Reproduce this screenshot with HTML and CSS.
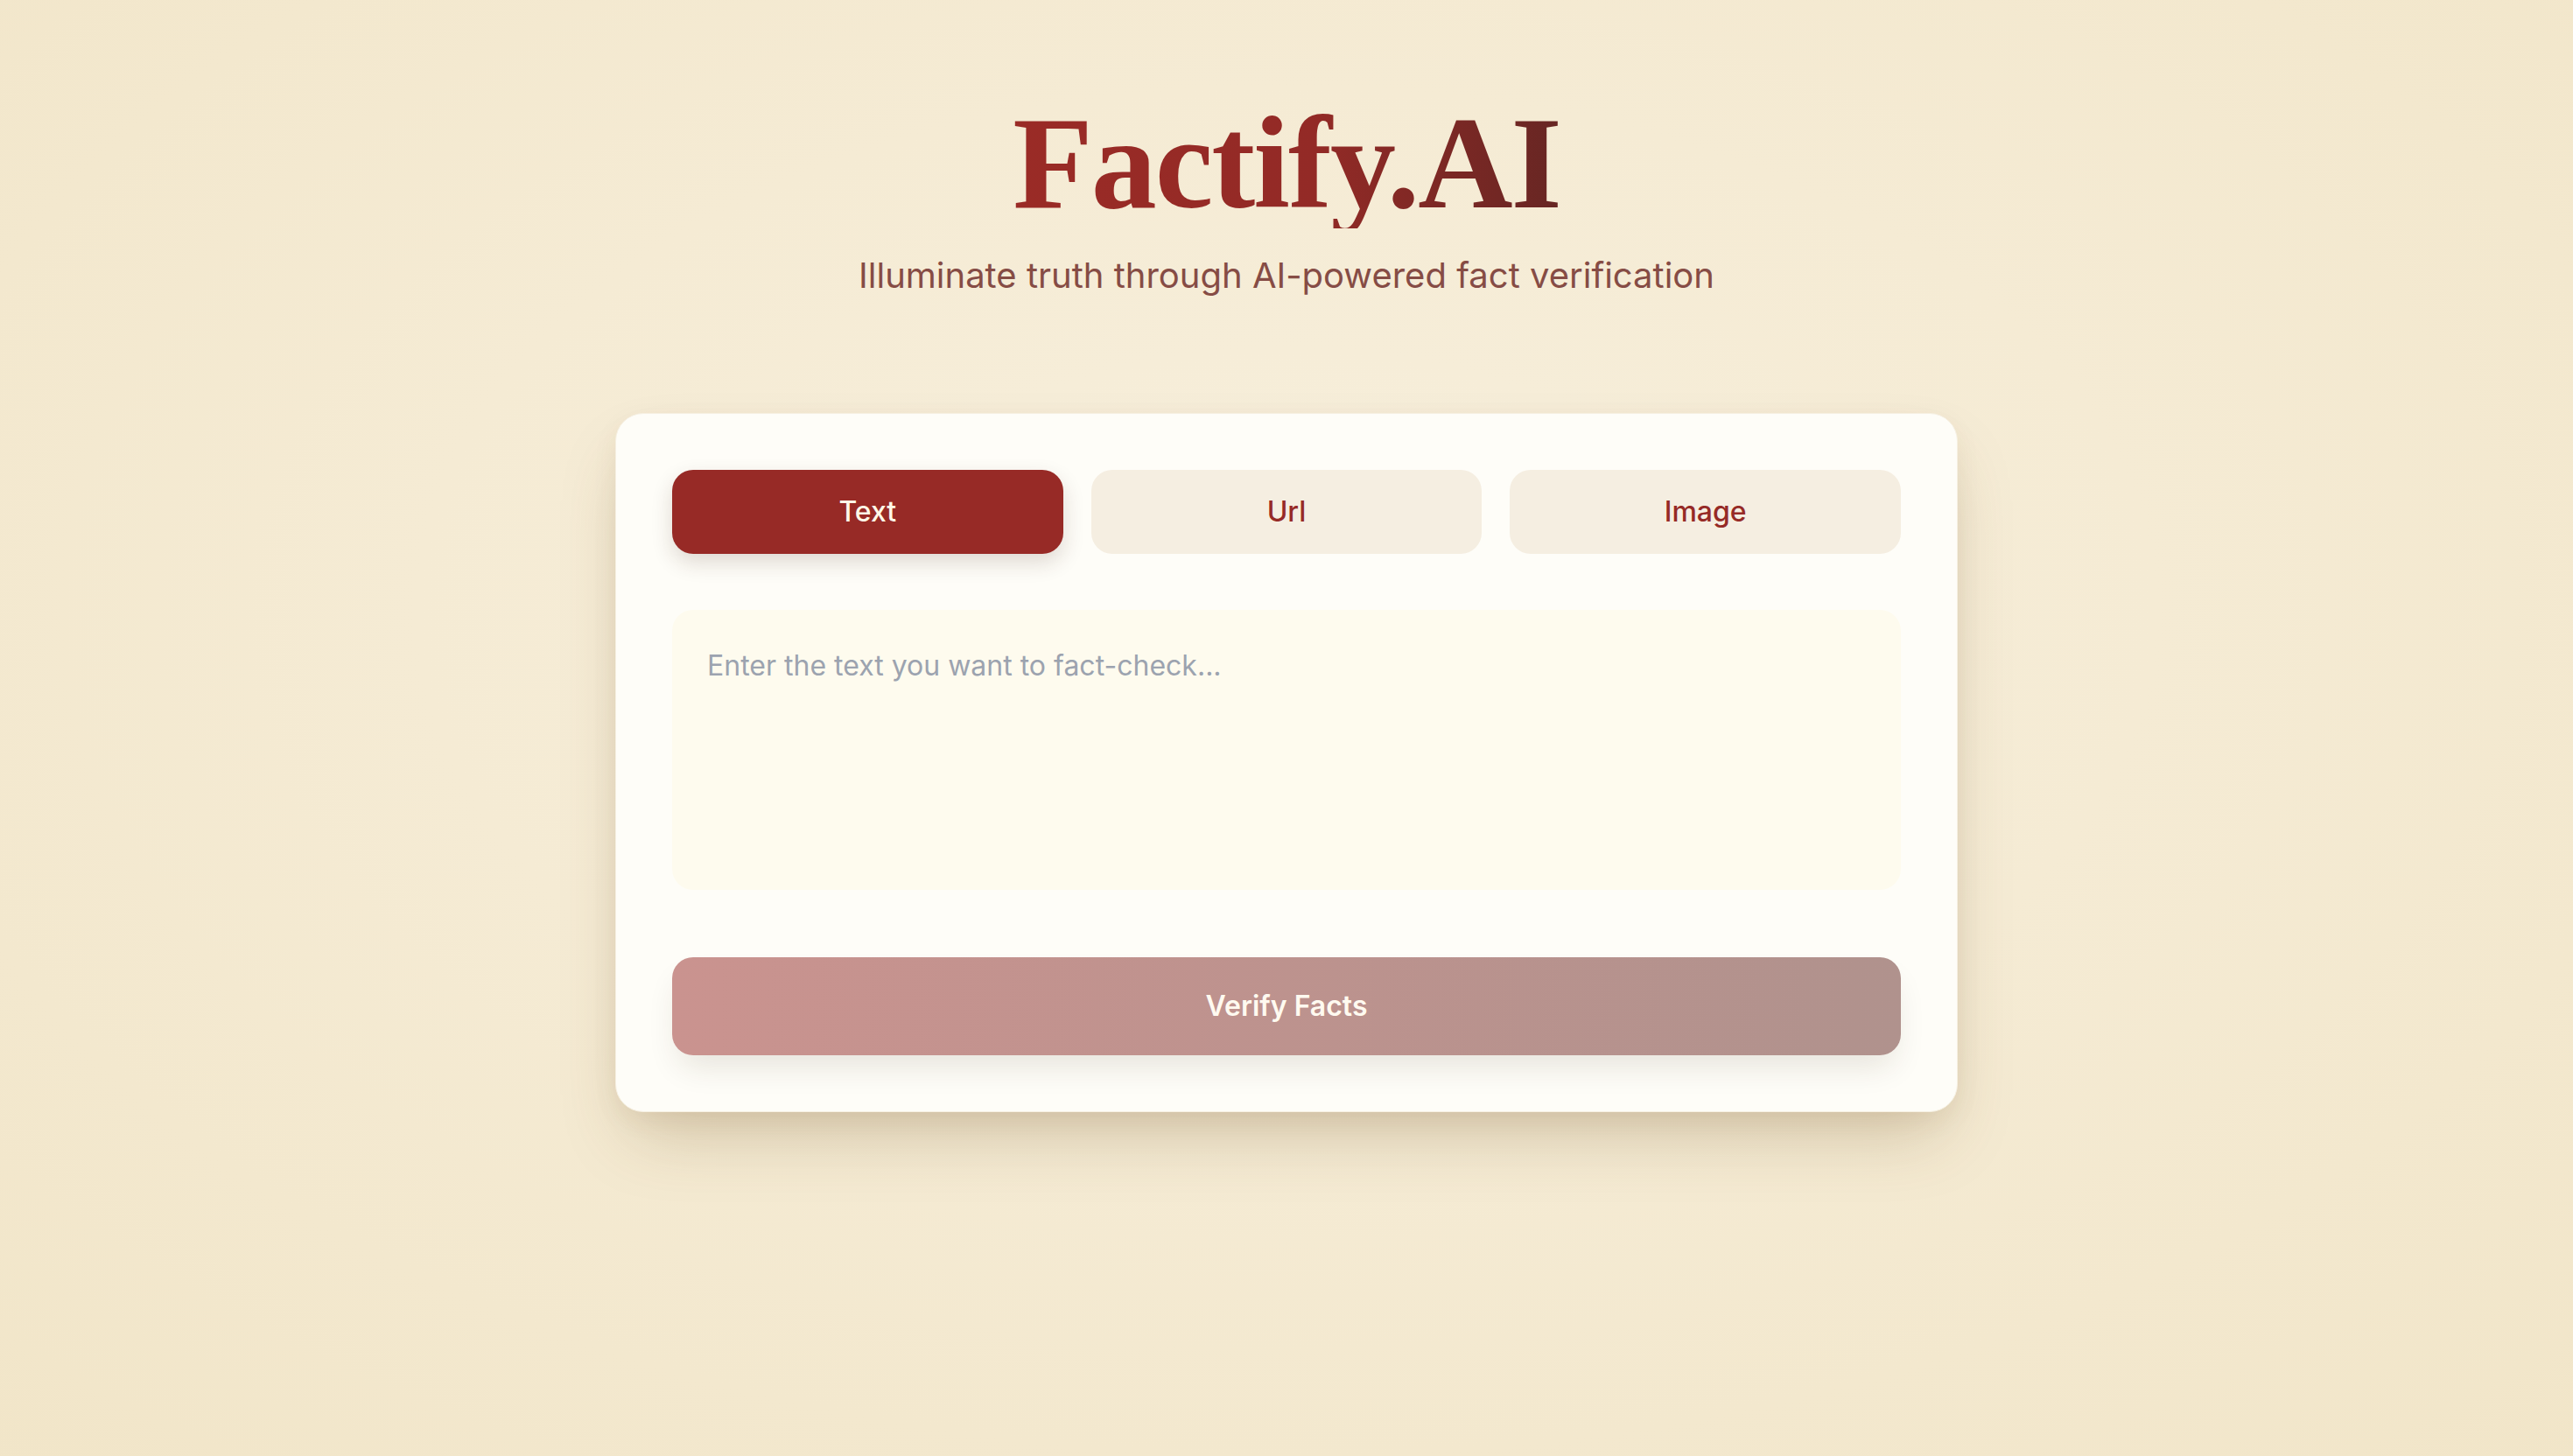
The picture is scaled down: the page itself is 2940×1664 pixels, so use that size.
FILE: index.html
```html
<!DOCTYPE html>
<html lang="en">
<head>
<meta charset="utf-8">
<title>Factify.AI</title>
<link rel="stylesheet" href="styles.css">
</head>
<body>
<main class="page">
  <header class="hero">
    <h1 class="brand">Factify.AI</h1>
    <p class="tagline">Illuminate truth through AI-powered fact verification</p>
  </header>
  <section class="card">
    <div class="tabs">
      <button class="tab tab-active">Text</button>
      <button class="tab">Url</button>
      <button class="tab">Image</button>
    </div>
    <textarea class="input" placeholder="Enter the text you want to fact-check..."></textarea>
    <button class="verify" disabled>Verify Facts</button>
  </section>
</main>
</body>
</html>
```

FILE: styles.css
```css
* { box-sizing: border-box; }
html, body {
  margin: 0;
  padding: 0;
  height: 100%;
}
body {
  font-family: Inter, "Noto Sans", "Liberation Sans", sans-serif;
  background: radial-gradient(ellipse 75% 80% at 50% 42%, #f7efdc 0%, #f5ebd4 45%, #f1e5c8 100%);
  background-color: #f1e5c8;
  min-height: 1664px;
}
.page {
  display: flex;
  flex-direction: column;
  align-items: center;
  padding-top: 111px;
}
.hero {
  display: flex;
  flex-direction: column;
  align-items: center;
}
.brand {
  margin: 0;
  font-family: "Liberation Serif", "Times New Roman", serif;
  font-weight: 700;
  font-size: 150px;
  line-height: 150px;
  letter-spacing: -2px;
  background: linear-gradient(90deg, #9a2b26 0%, #932a26 55%, #672623 100%);
  -webkit-background-clip: text;
  background-clip: text;
  color: transparent;
}
.tagline {
  margin: 26px 0 0;
  font-size: 40px;
  line-height: 56px;
  color: #864c45;
}
.card {
  margin-top: 129px;
  width: 1534px;
  background: #fefdf8;
  border: 1px solid #f6f0e2;
  border-radius: 32px;
  padding: 64px;
  display: flex;
  flex-direction: column;
  box-shadow: 0 40px 80px -20px rgba(100, 70, 25, 0.26), 0 10px 30px rgba(100, 70, 25, 0.06);
}
.tabs {
  display: grid;
  grid-template-columns: repeat(3, 1fr);
  gap: 32px;
}
.tab {
  height: 96px;
  border: none;
  border-radius: 24px;
  background: #f5eee1;
  color: #962a26;
  font-family: Inter, "Noto Sans", sans-serif;
  font-size: 32px;
  font-weight: 500;
  padding-bottom: 2px;
}
.tab-active {
  background: #972a26;
  color: #fff8e8;
  box-shadow: 0 10px 24px rgba(60, 30, 20, 0.16);
}
.input {
  display: block;
  margin-top: 64px;
  height: 320px;
  width: 100%;
  resize: none;
  border: none;
  border-radius: 24px;
  background: #fefbee;
  padding: 40px;
  font-family: Inter, "Noto Sans", sans-serif;
  font-size: 32px;
  line-height: 48px;
  color: #333;
  outline: none;
}
.input::placeholder {
  color: #9ca3af;
}
.verify {
  margin-top: 77px;
  height: 112px;
  border: none;
  border-radius: 24px;
  background: linear-gradient(90deg, #ca938f 0%, #b0928d 100%);
  color: #fffaf0;
  font-family: Inter, "Noto Sans", sans-serif;
  font-size: 32px;
  font-weight: 600;
  padding-bottom: 2px;
  box-shadow: 0 20px 36px -8px rgba(60, 40, 20, 0.12);
}
```
